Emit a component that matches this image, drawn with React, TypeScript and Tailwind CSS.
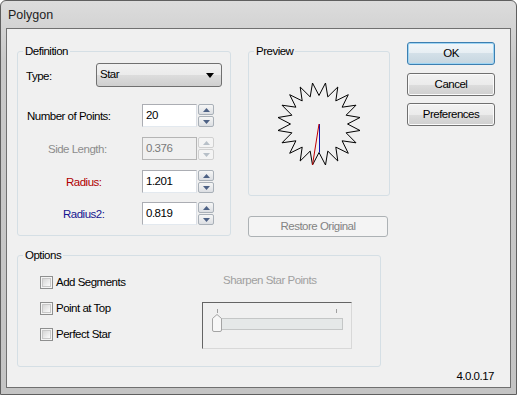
import React from "react";

const btnGrad =
  "bg-[linear-gradient(to_bottom,#f2f2f2_0%,#ebebeb_50%,#dddddd_50%,#cfcfcf_100%)]";

const starPoints = () => {
  const cx = 70;
  const cy = 72;
  const ro = 41.5;
  const ri = 28.5;
  const pts: string[] = [];
  for (let i = 0; i < 40; i++) {
    const a = (i * Math.PI) / 20;
    const r = i % 2 ? ro : ri;
    pts.push(`${(cx + r * Math.sin(a)).toFixed(1)},${(cy - r * Math.cos(a)).toFixed(1)}`);
  }
  return pts.join(" ");
};

const Group = ({
  label,
  className,
  children,
}: {
  label: string;
  className: string;
  children?: React.ReactNode;
}) => (
  <div className={`relative rounded-[3px] border border-[#d5dfe5] ${className}`}>
    <span className="absolute -top-[7px] left-[5px] bg-[#f0f0f0] px-[2px] leading-[13px]">
      {label}
    </span>
    {children}
  </div>
);

const Arrow = ({ up, disabled }: { up?: boolean; disabled?: boolean }) => (
  <svg width="7" height="4" viewBox="0 0 7 4">
    <path
      d={up ? "M0 4 L3.5 0 L7 4 Z" : "M0 0 L7 0 L3.5 4 Z"}
      fill={disabled ? "#b8c0c8" : "#4d6185"}
    />
  </svg>
);

const Spin = ({ disabled }: { disabled?: boolean }) => (
  <div className="ml-[1px] flex w-[16px] flex-col gap-[1px]">
    {[true, false].map((up) => (
      <div
        key={String(up)}
        className={`flex h-[11px] items-center justify-center rounded-[2px] border ${
          disabled
            ? "border-[#d0d0d0] bg-[#f4f4f4]"
            : "border-[#a9b0b8] bg-[linear-gradient(to_bottom,#f6f6f6,#dcdfe3)]"
        }`}
      >
        <Arrow up={up} disabled={disabled} />
      </div>
    ))}
  </div>
);

const NumRow = ({
  label,
  value,
  pl,
  color,
  disabled,
  mt,
}: {
  label: string;
  value: string;
  pl: string;
  color: string;
  disabled?: boolean;
  mt: string;
}) => (
  <div className={`flex h-[23px] items-center ${mt}`}>
    <div className={`w-[124px] pt-[2px] ${pl} ${color}`}>{label}</div>
    <div
      className={`flex h-[23px] w-[55px] items-center border pl-[3px] ${
        disabled
          ? "border-[#b5b5b5] bg-[#f0f0f0] text-[#7a7a7a]"
          : "border-[#abadb3] border-b-[#e3e9ef] border-r-[#dbdfe6] bg-white"
      }`}
    >
      {value}
    </div>
    <Spin disabled={disabled} />
  </div>
);

const CheckRow = ({ label, mt }: { label: string; mt?: string }) => (
  <div className={`flex h-[13px] items-center ${mt ?? ""}`}>
    <div className="flex h-[13px] w-[13px] items-center justify-center border border-[#8e8f8f] bg-[#f4f4f4]">
      <div className="h-[9px] w-[9px] border border-[#c8c8c8] bg-[linear-gradient(135deg,#d6d6d6,#fbfbfb)]" />
    </div>
    <span className="ml-[3px] leading-[13px]">{label}</span>
  </div>
);

export default function App() {
  return (
    <div className="flex h-[395px] w-[517px] flex-col rounded-t-[6px] border border-[#5f5f5f] bg-[linear-gradient(to_bottom,#dcdcdc,#c9c9c9_60px,#c4c4c4)] font-['Liberation_Sans',sans-serif] text-[11.5px] tracking-[-0.5px] text-black">
      {/* title bar */}
      <div className="flex h-[27px] items-center pl-[7px] pt-[1px] text-[12.5px] tracking-normal text-[#1e1e1e]">
        Polygon
      </div>

      <div className="flex flex-1 px-[5px]">
        {/* client area */}
        <div className="flex h-[360px] w-[505px] flex-col border border-[#707070] bg-[#f0f0f0]">
          <div className="flex pl-[10px] pt-[13px]">
            <div className="flex flex-col pt-[9px]">
              <div className="flex gap-[17px]">
                <Group label="Definition" className="h-[185px] w-[214px]">
                  <div className="mt-[11px] flex h-[24px] items-center pl-[8px]">
                    <div className="w-[70px] pt-[4px]">Type:</div>
                    <div
                      className={`flex h-[24px] w-[126px] items-center justify-between rounded-[3px] border border-[#707070] pl-[3px] pr-[7px] ${btnGrad}`}
                    >
                      <span>Star</span>
                      <svg width="8" height="5" viewBox="0 0 8 5">
                        <path d="M0 0 L8 0 L4 5 Z" fill="#000" />
                      </svg>
                    </div>
                  </div>
                  <NumRow
                    label="Number of Points:"
                    value="20"
                    pl="pl-[9px]"
                    color=""
                    mt="mt-[17px]"
                  />
                  <NumRow
                    label="Side Length:"
                    value="0.376"
                    pl="pl-[30px]"
                    color="text-[#8d8d8d]"
                    disabled
                    mt="mt-[10px]"
                  />
                  <NumRow
                    label="Radius:"
                    value="1.201"
                    pl="pl-[48px]"
                    color="text-[#b00000]"
                    mt="mt-[10px]"
                  />
                  <NumRow
                    label="Radius2:"
                    value="0.819"
                    pl="pl-[45px]"
                    color="text-[#15158f]"
                    mt="mt-[9px]"
                  />
                </Group>

                <div className="flex flex-col">
                  <Group label="Preview" className="h-[145px] w-[142px]">
                    <svg width="140" height="143" viewBox="0 0 140 143">
                      <polygon points={starPoints()} fill="none" stroke="#000" strokeWidth="1" />
                      <line x1="70.5" y1="72" x2="70.5" y2="100.5" stroke="#1010b0" strokeWidth="1" />
                      <line x1="70" y1="72" x2="63.5" y2="113" stroke="#c00000" strokeWidth="1" />
                    </svg>
                  </Group>
                  <div className="mt-[20px] flex h-[21px] w-[140px] items-center justify-center rounded-[3px] border border-[#adb2b5] bg-[#f4f4f4] text-[#838383]">
                    Restore Original
                  </div>
                </div>
              </div>

              <Group label="Options" className="mt-[18px] flex h-[112px] w-[364px]">
                <div className="w-[184px] pl-[22px] pt-[20px]">
                  <CheckRow label="Add Segments" />
                  <CheckRow label="Point at Top" mt="mt-[13px]" />
                  <CheckRow label="Perfect Star" mt="mt-[13px]" />
                </div>
                <div className="flex flex-col pt-[18px]">
                  <div className="pl-[21px] leading-[13px] text-[#a0a0a0]">Sharpen Star Points</div>
                  <div className="mt-[15px] h-[47px] w-[150px] border border-[#646464] border-b-[#d8d8d8] border-r-[#d8d8d8] bg-[#f0f0f0]">
                    <svg width="148" height="45" viewBox="0 0 148 45">
                      <line x1="14.5" y1="6" x2="14.5" y2="10" stroke="#a0a0a0" />
                      <line x1="133.5" y1="6" x2="133.5" y2="10" stroke="#a0a0a0" />
                      <rect x="10.5" y="15.5" width="129" height="11" fill="#e5e8e8" stroke="#c4c6c6" />
                      <path
                        d="M9.5 15.5 L14 11.5 L18.5 15.5 L18.5 27 Q18.5 28.5 17 28.5 L11 28.5 Q9.5 28.5 9.5 27 Z"
                        fill="#f7f7f7"
                        stroke="#a4a4a4"
                      />
                    </svg>
                  </div>
                </div>
              </Group>
            </div>

            <div className="ml-[17px] flex w-[88px] flex-col">
              <div className="flex h-[23px] items-center justify-center rounded-[3px] border border-[#3c7fb1] bg-[linear-gradient(to_bottom,#f1f6f9_0%,#e6eef3_50%,#d3e0e8_50%,#c6d6e0_100%)] shadow-[inset_0_0_0_1px_#9fd5f3]">
                OK
              </div>
              <div
                className={`mt-[8px] flex h-[23px] items-center justify-center rounded-[3px] border border-[#707070] shadow-[inset_0_0_0_1px_#fbfbfb] ${btnGrad}`}
              >
                Cancel
              </div>
              <div
                className={`mt-[7px] flex h-[23px] items-center justify-center rounded-[3px] border border-[#707070] shadow-[inset_0_0_0_1px_#fbfbfb] ${btnGrad}`}
              >
                Preferences
              </div>
            </div>
          </div>

          <div className="mt-[3px] flex justify-end pr-[16px] leading-[13px]">4.0.0.17</div>
        </div>
      </div>
    </div>
  );
}
